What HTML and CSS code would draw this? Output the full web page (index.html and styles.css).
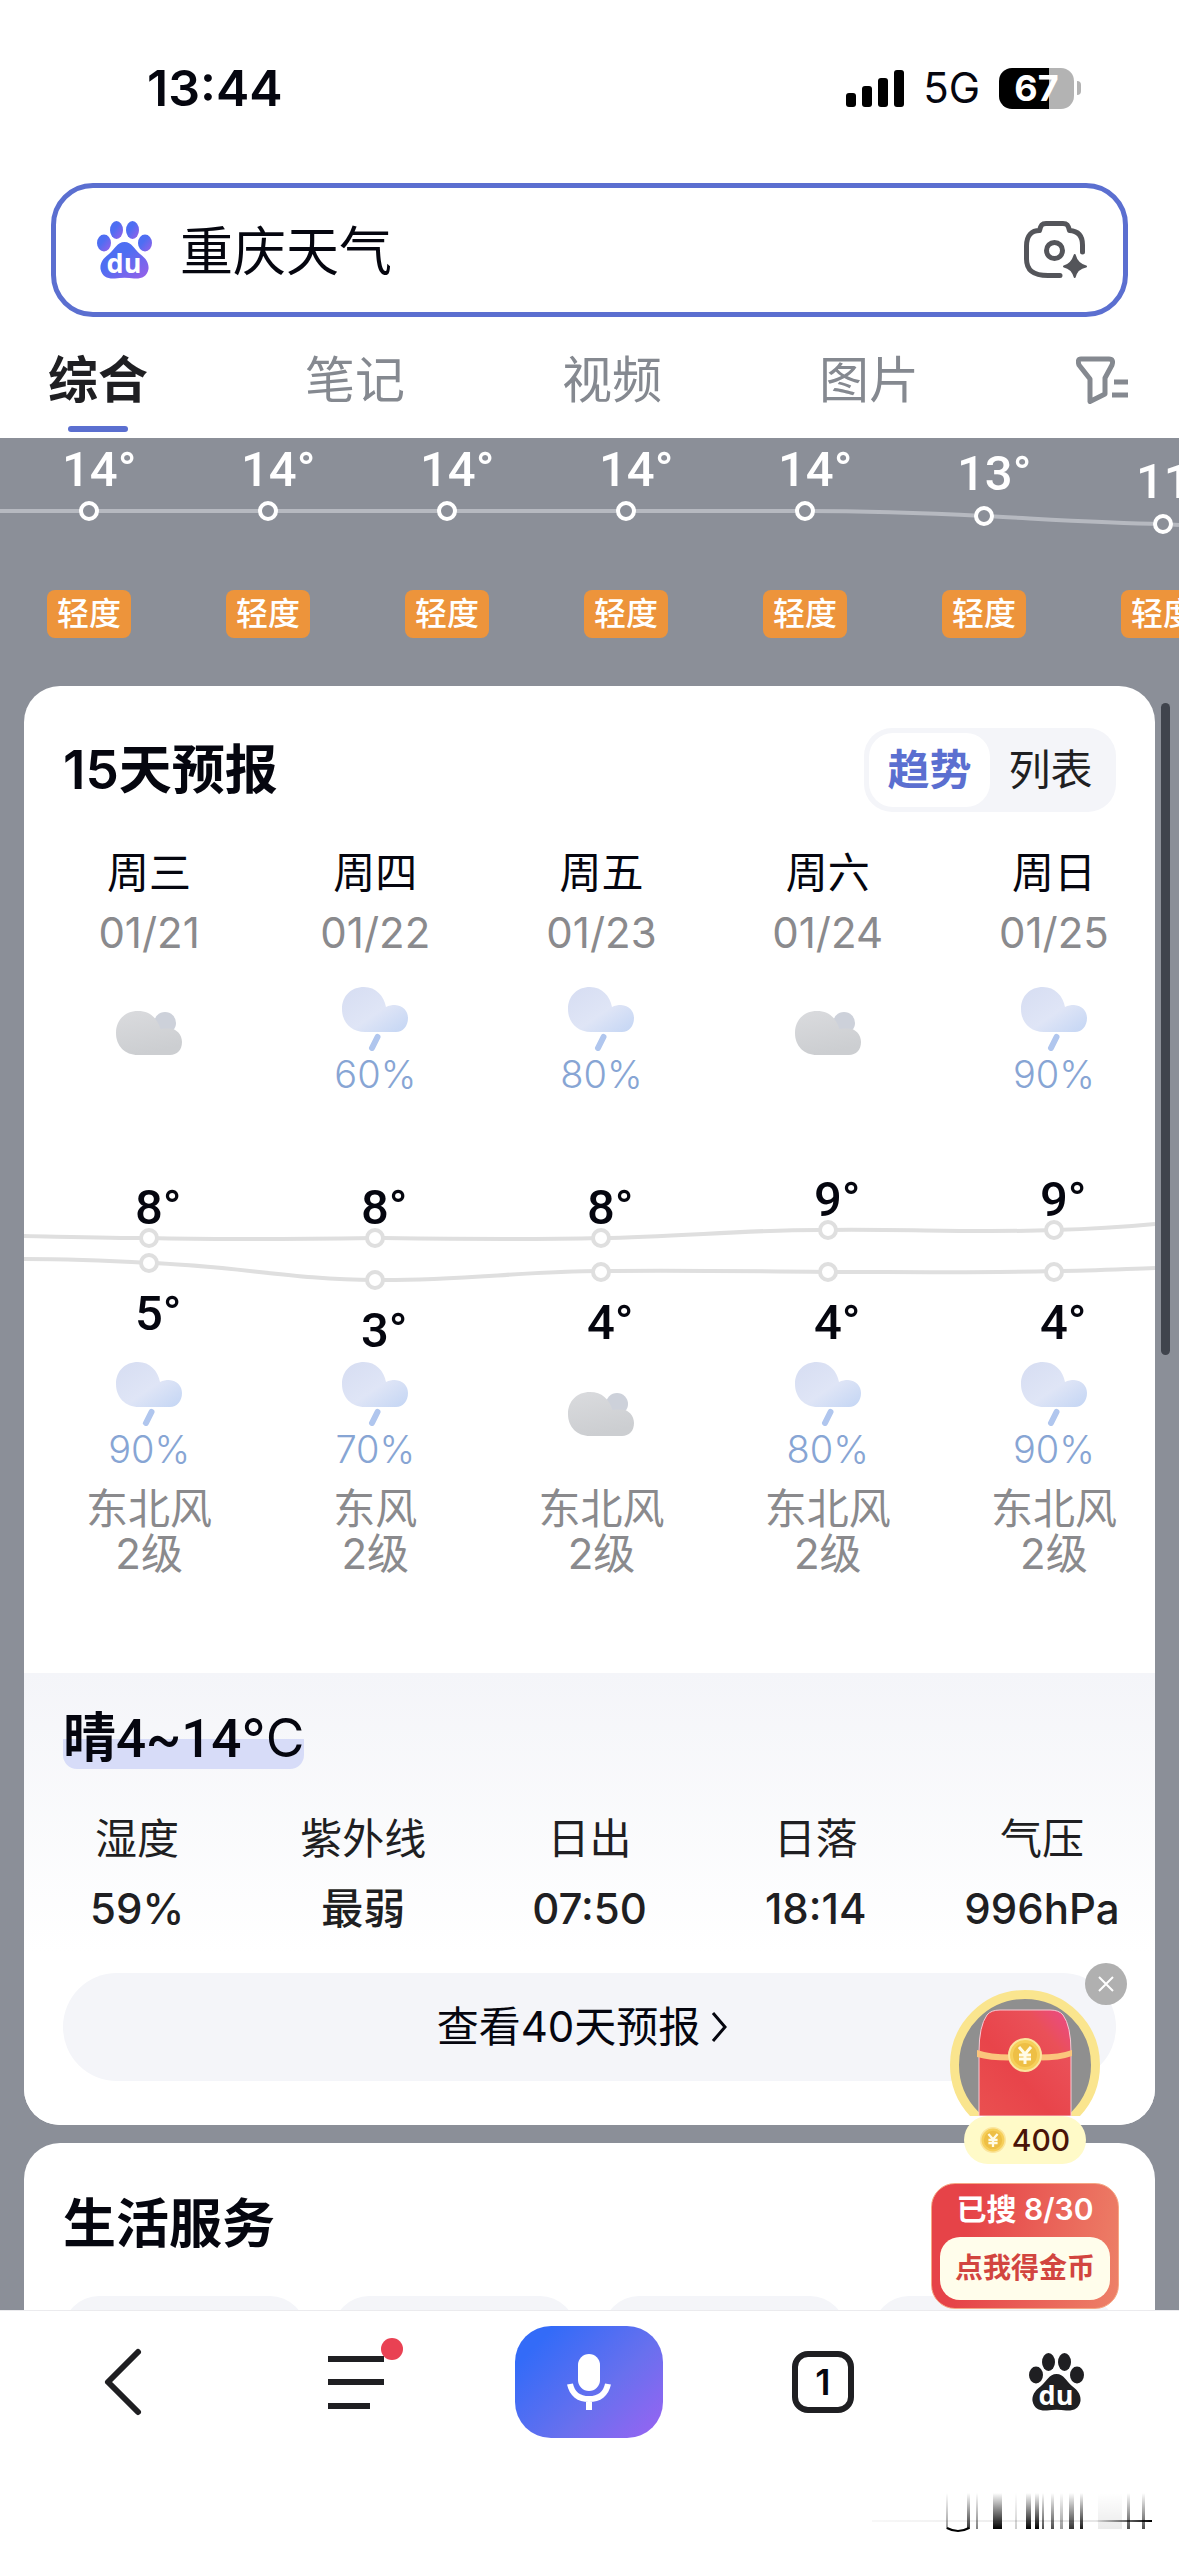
FILE: index.html
```html
<!DOCTYPE html>
<html lang="zh-CN">
<head>
<meta charset="utf-8">
<meta name="viewport" content="width=device-width, initial-scale=1">
<title>重庆天气</title>
<link rel="stylesheet" href="styles.css">
</head>
<body>
<svg class="defs" width="0" height="0" aria-hidden="true">
  <defs>
    <linearGradient id="pawFill" x1="0" y1="0" x2="1" y2="1">
      <stop offset="0.4" stop-color="#4e6ef2"/><stop offset="1" stop-color="#9a5fe8"/>
    </linearGradient>
    <linearGradient id="rainFill" x1="0" y1="0" x2="1" y2="1">
      <stop offset="0" stop-color="#d6ddf2"/><stop offset="0.55" stop-color="#dfe5f6"/><stop offset="1" stop-color="#c3d5f4"/>
    </linearGradient>
    <linearGradient id="cloudFill" x1="0" y1="0" x2="0.3" y2="1">
      <stop offset="0" stop-color="#dadbde"/><stop offset="1" stop-color="#ccced1"/>
    </linearGradient>
    <linearGradient id="envelopeFill" x1="0" y1="1" x2="1" y2="0">
      <stop offset="0" stop-color="#ea5050"/><stop offset="0.4" stop-color="#e8444a"/><stop offset="0.75" stop-color="#ea5058"/><stop offset="1" stop-color="#ea4a8a"/>
    </linearGradient>
    <linearGradient id="streak" x1="0" y1="0" x2="0" y2="1">
      <stop offset="0" stop-color="#000" stop-opacity="0"/><stop offset="1" stop-color="#000"/>
    </linearGradient>
    <linearGradient id="sweep" x1="0" y1="0" x2="1" y2="0">
      <stop offset="0" stop-color="#000" stop-opacity="0.03"/><stop offset="0.8" stop-color="#000" stop-opacity="0.1"/><stop offset="1" stop-color="#000"/>
    </linearGradient>
    <symbol id="rain" viewBox="0 0 66 64">
      <path d="M22 0C34 0 42 9 44 20C47 18.500 50 18 53 18C61 18.500 66 24 66 31C66 39 61 45 54 45H23C9 45 0 35 0 22C0 9 9 0 22 0Z" fill="url(#rainFill)"/>
      <path d="M35.500 50L30 61" stroke="#b0c6ee" stroke-width="6" stroke-linecap="round"/>
    </symbol>
    <symbol id="cloud" viewBox="0 0 66 44">
      <circle cx="49" cy="12" r="11" fill="#cdd1da"/>
      <path d="M22 0C34 0 41 7 44.500 18C47 17 50 17.500 54 17.500C61 18 66 24 66 31C66 39 61 44 54 44H22C9 44 0 35 0 22C0 9 9 0 22 0Z" fill="url(#cloudFill)"/>
    </symbol>
    <symbol id="coin" viewBox="0 0 34 34">
      <circle cx="17" cy="17" r="16" fill="#f6cf5a" stroke="#fbe59c" stroke-width="2"/>
      <circle cx="17" cy="17" r="12" fill="#eebf45"/>
      <path d="M11 9L17 16L23 9M17 16V26M11 17H23M11 21H23" fill="none" stroke="#fffbe6" stroke-width="3"/>
    </symbol>
    <symbol id="paw" viewBox="0 0 55 58">
      <ellipse cx="7" cy="22" rx="7" ry="8.500"/><ellipse cx="19.500" cy="9" rx="6.500" ry="9"/>
      <ellipse cx="35.500" cy="9" rx="6.500" ry="9"/><ellipse cx="48" cy="22" rx="7" ry="8.500"/>
      <path d="M27.500 21C35 21 37 28 43 33C50 38 52 43 51.500 48C50 56 44 58 37 57.500C31 56.500 24 56.500 18 57.500C11 58 5 56 3.500 48C3 43 5 38 12 33C18 28 20 21 27.500 21Z"/>
    </symbol>
  </defs>
</svg>

<header class="top">
  <div class="status">
    <time class="status-time">13:44</time>
    <div class="status-right">
      <svg width="58" height="38" viewBox="0 0 58 38" aria-hidden="true"><rect y="24" width="10" height="14" rx="3"/><rect x="16" y="17" width="10" height="21" rx="3"/><rect x="32" y="9" width="10" height="29" rx="3"/><rect x="48" y="1" width="10" height="37" rx="3"/></svg>
      <span class="network">5G</span>
      <span class="battery"><span class="battery-body">67</span><span class="battery-tip"></span></span>
    </div>
  </div>
  <form class="search">
    <svg class="paw-blue" width="55" height="58" viewBox="0 0 55 58" aria-hidden="true"><use href="#paw"/><text class="paw-text" x="27" y="52">du</text></svg>
    <input class="search-input" type="text" value="重庆天气" aria-label="搜索">
    <button class="icon-button" type="button" aria-label="拍照搜索">
      <svg width="63" height="58" viewBox="0 0 63 58" fill="none" stroke="#54555a" stroke-width="5" stroke-linecap="round" stroke-linejoin="round"><path d="M36 54.500H24C9 54.500 2.500 49 2.500 38V25C2.500 14 8 9.500 15.500 9.500C17 4 18 2.500 22 2.500H39C43 2.500 44 4 45.500 9.500C53 10 58.500 14 58.500 24V31"/><circle cx="30.500" cy="29.500" r="8"/><path d="M50.700 34Q53 43 62 45.500Q53 47 50.700 56Q48 47 40 45.500Q48 43 50.700 34Z" fill="#54555a" stroke-width="2"/></svg>
    </button>
  </form>
  <nav class="tabs">
    <a class="tab tab-active" href="#all">综合</a>
    <a class="tab" href="#notes">笔记</a>
    <a class="tab" href="#video">视频</a>
    <a class="tab" href="#images">图片</a>
    <button class="icon-button" type="button" aria-label="筛选">
      <svg width="52" height="48" viewBox="0 0 52 48" fill="none" stroke="#858990" stroke-width="5" stroke-linejoin="round"><path d="M5 3H33Q38 3 36 9L29 22V38L14 45.500V23L3 9Q1 3 5 3Z"/><path d="M38 26H52M36 39H52"/></svg>
    </button>
  </nav>
</header>

<main class="content">
  <section class="hourly" aria-label="逐小时预报">
    <svg class="chart" viewBox="0 0 1179 130">
      <path d="M0 73H805C865 73 925 75 984 78C1044 81 1104 85 1163 86L1179 87" fill="none" stroke="#b6b9c0" stroke-width="4"/>
      <g class="hour-dots"><circle cx="89" cy="73" r="8"/><circle cx="268" cy="73" r="8"/><circle cx="447" cy="73" r="8"/><circle cx="626" cy="73" r="8"/><circle cx="805" cy="73" r="8"/><circle cx="984" cy="78" r="8"/><circle cx="1163" cy="86" r="8"/></g>
      <g class="hour-temps"><text x="62" y="48">14°</text><text x="241" y="48">14°</text><text x="420" y="48">14°</text><text x="599" y="48">14°</text><text x="778" y="48">14°</text><text x="957" y="52">13°</text><text x="1136" y="60">11°</text></g>
    </svg>
    <ul class="air">
      <li>轻度</li><li>轻度</li><li>轻度</li><li>轻度</li><li>轻度</li><li>轻度</li><li>轻度</li>
    </ul>
  </section>

  <section class="card">
    <div class="card-head">
      <h2 class="card-title">15天预报</h2>
      <div class="toggle">
        <button class="toggle-item toggle-on" type="button">趋势</button>
        <button class="toggle-item" type="button">列表</button>
      </div>
    </div>
    <ul class="days">
      <li><b class="weekday">周三</b><span class="date">01/21</span><div class="sky"><svg class="cloud"><use href="#cloud"/></svg></div></li>
      <li><b class="weekday">周四</b><span class="date">01/22</span><div class="sky"><svg class="rain"><use href="#rain"/></svg><span class="chance">60%</span></div></li>
      <li><b class="weekday">周五</b><span class="date">01/23</span><div class="sky"><svg class="rain"><use href="#rain"/></svg><span class="chance">80%</span></div></li>
      <li><b class="weekday">周六</b><span class="date">01/24</span><div class="sky"><svg class="cloud"><use href="#cloud"/></svg></div></li>
      <li><b class="weekday">周日</b><span class="date">01/25</span><div class="sky"><svg class="rain"><use href="#rain"/></svg><span class="chance">90%</span></div></li>
    </ul>
    <svg class="chart" viewBox="0 0 1131 260">
      <g fill="none" stroke="#dfdfdf" stroke-width="4">
        <path d="M0 141C50 142 85 143 125 143C200 145 276 144 351 143C430 144 500 145 577 143C655 142 730 134 804 135C880 134 960 138 1030 135C1070 134 1100 132 1131 129"/>
        <path d="M0 164C50 164 90 166 125 168C205 170 270 185 351 185C435 186 500 176 577 176C650 175 730 176 804 177C880 177 960 178 1030 176C1070 176 1100 174 1131 173"/>
      </g>
      <g class="day-dots"><circle cx="125" cy="143" r="8"/><circle cx="351" cy="143" r="8"/><circle cx="577" cy="143" r="8"/><circle cx="804" cy="135" r="8"/><circle cx="1030" cy="135" r="8"/><circle cx="125" cy="168" r="8"/><circle cx="351" cy="185" r="8"/><circle cx="577" cy="177" r="8"/><circle cx="804" cy="177" r="8"/><circle cx="1030" cy="177" r="8"/></g>
      <g class="day-temps"><text x="111" y="129">8°</text><text x="337" y="129">8°</text><text x="563" y="129">8°</text><text x="790" y="121">9°</text><text x="1016" y="121">9°</text><text x="111" y="235">5°</text><text x="337" y="252">3°</text><text x="563" y="244">4°</text><text x="790" y="244">4°</text><text x="1016" y="244">4°</text></g>
    </svg>
    <ul class="days nights">
      <li><div class="sky"><svg class="rain"><use href="#rain"/></svg><span class="chance">90%</span></div><span class="wind">东北风<br>2级</span></li>
      <li><div class="sky"><svg class="rain"><use href="#rain"/></svg><span class="chance">70%</span></div><span class="wind">东风<br>2级</span></li>
      <li><div class="sky"><svg class="cloud"><use href="#cloud"/></svg></div><span class="wind">东北风<br>2级</span></li>
      <li><div class="sky"><svg class="rain"><use href="#rain"/></svg><span class="chance">80%</span></div><span class="wind">东北风<br>2级</span></li>
      <li><div class="sky"><svg class="rain"><use href="#rain"/></svg><span class="chance">90%</span></div><span class="wind">东北风<br>2级</span></li>
    </ul>
    <div class="today">
      <h3 class="today-title"><span class="mark">晴<span class="digits">4~14</span><span class="unit">°C</span></span></h3>
      <dl class="stats">
        <div><dt>湿度</dt><dd>59%</dd></div>
        <div><dt>紫外线</dt><dd>最弱</dd></div>
        <div><dt>日出</dt><dd>07:50</dd></div>
        <div><dt>日落</dt><dd>18:14</dd></div>
        <div><dt>气压</dt><dd>996hPa</dd></div>
      </dl>
      <a class="more" href="#forty">查看40天预报<svg width="18" height="36" viewBox="0 0 18 36" fill="none" stroke="#05060f" stroke-width="3"><path d="M3 4L15 18L3 32"/></svg></a>
    </div>
  </section>

  <section class="card services">
    <h2 class="card-title">生活服务</h2>
    <div class="service-grid"><div></div><div></div><div></div><div></div></div>
  </section>
  <div class="scrollbar"></div>
  <aside class="reward">
    <button class="reward-close" type="button" aria-label="关闭"><svg width="18" height="18" viewBox="0 0 18 18" stroke="#fff" stroke-width="2"><path d="M2 2L16 16M16 2L2 16"/></svg></button>
    <div class="packet">
      <svg width="150" height="126" viewBox="0 0 150 126" aria-hidden="true">
        <circle cx="75" cy="75" r="70.500" fill="#8f8f8f" stroke="#fae58e" stroke-width="9"/>
        <path d="M29 126V62Q29 36 37 25Q41 20 50 20H100Q109 20 113 25Q121 36 121 62V126Z" fill="url(#envelopeFill)" stroke="#f9c9d4" stroke-width="1"/>
        <path d="M27 60Q45 66 75 64Q105 66 122 60V66Q105 72 75 70Q45 72 27 67Z" fill="#fbc57c"/>
        <use href="#coin" x="58" y="48" width="34" height="34"/>
      </svg>
      <span class="coins"><svg width="26" height="26" aria-hidden="true"><use href="#coin"/></svg>400</span>
    </div>
    <div class="task">
      <span class="task-count">已搜 8/30</span>
      <button class="task-button" type="button">点我得金币</button>
    </div>
  </aside>
</main>

<footer class="toolbar">
  <nav class="tools">
    <button class="tool" type="button" aria-label="返回"><svg width="38" height="66" viewBox="0 0 38 66" fill="none" stroke="#1f1f22" stroke-width="6" stroke-linecap="round" stroke-linejoin="round"><path d="M34 3L4 33L34 63"/></svg></button>
    <button class="tool" type="button" aria-label="菜单"><svg width="76" height="66" viewBox="0 0 76 66"><path d="M10 10H66M10 33H66M10 57H52" stroke="#1f1f22" stroke-width="6"/><circle cx="74" cy="0" r="11" fill="#e94153"/></svg></button>
    <button class="tool" type="button" aria-label="语音搜索"><span class="mic"><svg width="44" height="56" viewBox="0 0 44 56"><rect x="11" y="0" width="22" height="37" rx="11" fill="#fff"/><path d="M3 30C5 40 12 45 22 45S39 40 41 30M22 45V56" fill="none" stroke="#fff" stroke-width="6"/></svg></span></button>
    <button class="tool" type="button"><span class="pages">1</span></button>
    <button class="tool" type="button" aria-label="首页"><svg class="paw-dark" width="55" height="58" viewBox="0 0 55 58"><use href="#paw"/><text class="paw-text" x="27" y="52">du</text></svg></button>
  </nav>
  <svg class="trace" width="280" height="40" viewBox="0 0 280 40" aria-hidden="true">
    <g fill="url(#streak)">
      <rect x="74" width="2" height="36" opacity="0.400"/><rect x="95" width="3" height="36" opacity="0.800"/><rect x="104" width="2" height="36" opacity="0.500"/><rect x="121" width="9" height="36"/><rect x="143" width="2" height="36" opacity="0.200"/><rect x="154" width="5" height="36"/><rect x="163" width="4" height="36"/><rect x="170" width="2" height="36" opacity="0.700"/><rect x="179" width="3" height="36" opacity="0.700"/><rect x="188" width="3" height="36" opacity="0.400"/><rect x="197" width="5" height="36" opacity="0.800"/><rect x="208" width="3" height="36" opacity="0.900"/><rect x="226" width="24" height="36" opacity="0.080"/><rect x="255" width="3" height="36" opacity="0.700"/><rect x="270" width="3" height="36" opacity="0.700"/>
    </g>
    <rect y="27" width="280" height="2" fill="url(#sweep)"/>
    <path d="M75 35Q86 41 97 35" fill="none" stroke="#000" stroke-width="2"/>
  </svg>
</footer>
</body>
</html>
```
FILE: styles.css
```css
* { box-sizing: border-box; }

body {
  margin: 0;
  height: 100vh;
  display: flex;
  flex-direction: column;
  overflow: hidden;
  background: #fff;
  color: #05060f;
  font-family: Inter, "Noto Sans CJK SC", sans-serif;
  font-size: 42px;
  line-height: 60px;
}

h2, h3, ul, dl, dd { margin: 0; padding: 0; }
ul { list-style: none; }
a { color: inherit; text-decoration: none; }
svg { display: block; flex-shrink: 0; }
button { border: 0; padding: 0; background: none; font: inherit; color: inherit; }
.defs { position: absolute; }
.icon-button { display: flex; }

/* Status bar */
.status {
  display: flex;
  justify-content: space-between;
  align-items: center;
  padding: 58px 98px 65px 147px;
}
.status-time { font-size: 50px; font-weight: 600; }
.status-right { display: flex; align-items: center; gap: 19px; }
.battery { display: flex; align-items: center; gap: 3px; }
.battery-body {
  width: 75px;
  border-radius: 13px;
  background: linear-gradient(90deg, #000 50px, #b3b3b3 50px);
  color: #fff;
  font-size: 36px;
  font-weight: 700;
  line-height: 41px;
  text-align: center;
}
.battery-tip { width: 4px; height: 14px; border-radius: 0 7px 7px 0; background: #b3b3b3; }

/* Search box and result tabs */
.search {
  display: flex;
  align-items: center;
  margin: 0 51px;
  height: 134px;
  padding: 0 36px 0 41px;
  border: 5px solid #5b6fd0;
  border-radius: 42px;
}
.search-input {
  flex: 1;
  min-width: 0;
  margin: 0 28px;
  padding: 4px 0 0;
  border: 0;
  outline: 0;
  background: none;
  color: inherit;
  font: inherit;
  font-size: 53px;
}
.paw-blue { fill: url(#pawFill); }
.paw-dark { fill: #1f1f22; }
.paw-text { fill: #fff; font: 700 27px "Open Sans", sans-serif; text-anchor: middle; }
.tabs {
  display: flex;
  justify-content: space-between;
  align-items: center;
  padding: 33px 51px 0 48px;
}
.tab {
  position: relative;
  padding-bottom: 28px;
  color: #858990;
  font-size: 50px;
}
.tabs .icon-button { padding-bottom: 28px; }
.tab-active { color: #1f1f22; font-weight: 700; }
.tab-active::after {
  content: "";
  position: absolute;
  bottom: 6px;
  left: 50%;
  width: 60px;
  margin-left: -30px;
  height: 6px;
  border-radius: 3px;
  background: #5b6fd0;
}

/* Scrolling content */
.content {
  position: relative;
  flex: 1;
  min-height: 0;
  overflow: hidden;
  background: #8b8f98;
}
.chart { width: 100%; height: auto; }
.hour-dots { fill: #8b8f98; stroke: #fff; stroke-width: 4px; }
.hour-temps { fill: #fff; font: 500 49px Roboto, sans-serif; }
.air { display: flex; padding: 22px 0 48px; }
.air li {
  flex: 0 0 84px;
  margin: 0 48px 0 47px;
  border-radius: 8px;
  background: #ed943b;
  color: #fff;
  font-size: 32px;
  font-weight: 500;
  line-height: 48px;
  text-align: center;
}

.card {
  margin: 0 24px 18px;
  overflow: hidden;
  border-radius: 36px;
  background: #fff;
}
.card-head {
  display: flex;
  justify-content: space-between;
  align-items: center;
  padding: 42px 39px 31px;
}
.card-title { font-size: 53px; font-weight: 600; }
.toggle {
  display: flex;
  padding: 5px;
  border-radius: 28px;
  background: #f4f5f9;
}
.toggle-item { width: 121px; line-height: 74px; color: #1f1f22; }
.toggle-on { border-radius: 24px; background: #fff; color: #5b6fd0; font-weight: 600; }

.days {
  display: grid;
  grid-template-columns: repeat(5, 1fr);
  margin: 0 -12px 0 12px;
  text-align: center;
}
.days li { display: flex; flex-direction: column; }
.weekday { font-weight: 400; }
.date { color: #8a8a8d; }
.sky {
  display: flex;
  flex-direction: column;
  align-items: center;
  height: 108px;
}
.days .date + .sky { margin-top: 24px; }
.rain { width: 66px; height: 64px; }
.cloud { width: 66px; height: 44px; margin-top: 24px; }
.nights .cloud { margin-top: 30px; }
.chance { color: #87a5d4; font-size: 38px; font-weight: 350; line-height: 46px; }
.day-dots { fill: #fff; stroke: #dfdfdf; stroke-width: 4px; }
.day-temps { fill: #05060f; font: 500 49px Roboto, sans-serif; }
.nights { padding: 7px 0 97px; }
.wind { padding-top: 16px; color: #8a8a8d; line-height: 45px; }

/* Today's summary */
.today {
  padding: 35px 0 44px;
  background: linear-gradient(#f4f5f9, #fff 280px);
}
.today-title { display: flex; padding: 0 39px; font-size: 53px; font-weight: 600; }
.mark {
  border-radius: 14px;
  background: linear-gradient(transparent 31px, #d7dcf8 31px);
}
.digits { font-family: Roboto, sans-serif; font-weight: 500; }
.unit { font-weight: 400; }
.stats {
  display: grid;
  grid-template-columns: repeat(5, 1fr);
  padding: 40px 0 34px;
  color: #1f1f22;
  text-align: center;
}
.stats dd { padding-top: 10px; font-weight: 500; }
.more {
  display: flex;
  justify-content: center;
  align-items: center;
  gap: 10px;
  height: 108px;
  margin: 0 39px;
  padding-right: 14px;
  border-radius: 54px;
  background: #f4f5f9;
}

.services { padding: 51px 39px; }
.services .card-title { font-weight: 700; }
.service-grid {
  display: grid;
  grid-template-columns: repeat(4, 1fr);
  gap: 27px;
  padding-top: 42px;
}
.service-grid div { height: 120px; border-radius: 36px; background: #f4f5f9; }

/* Overlays */
.scrollbar {
  position: absolute;
  top: 265px;
  right: 9px;
  width: 9px;
  height: 652px;
  border-radius: 5px;
  background: #40444d;
}
.reward {
  position: absolute;
  right: 60px;
  bottom: 1px;
  display: flex;
  flex-direction: column;
  align-items: center;
  width: 188px;
}
.reward-close {
  position: absolute;
  top: -27px;
  right: -8px;
  display: grid;
  place-items: center;
  width: 42px;
  height: 42px;
  border-radius: 50%;
  background: #b0b0b0;
}
.packet { display: flex; flex-direction: column; align-items: center; }
.coins {
  display: flex;
  justify-content: center;
  align-items: center;
  gap: 6px;
  width: 122px;
  height: 48px;
  border-radius: 24px;
  background: #fffac8;
  color: #4a1408;
  font-size: 30px;
  font-weight: 500;
}
.task {
  display: flex;
  flex-direction: column;
  width: 100%;
  margin-top: 19px;
  padding: 8px;
  border: 1px solid #f6a784;
  border-radius: 24px;
  background: linear-gradient(100deg, #e64348 20%, #ed8168);
  text-align: center;
}
.task-count { color: #fff; font-size: 30px; font-weight: 600; line-height: 34px; padding-bottom: 11px; }
.task-button {
  border-radius: 20px;
  background: #fffdeb;
  color: #d2453f;
  font-size: 28px;
  font-weight: 600;
  line-height: 63px;
}

/* Bottom toolbar */
.toolbar {
  padding: 15px 6px 23px;
  border-top: 1px solid #ebebee;
}
.tools { display: grid; grid-template-columns: repeat(5, 1fr); height: 112px; }
.tool { display: grid; place-items: center; }
.tool svg { overflow: visible; }
.mic {
  display: grid;
  place-items: center;
  width: 148px;
  height: 112px;
  border-radius: 36px;
  background: linear-gradient(135deg, #336bf8 15%, #6870ee 60%, #9a63f2);
}
.pages {
  width: 62px;
  height: 62px;
  border: 6px solid #1f1f22;
  border-radius: 16px;
  font-size: 36px;
  font-weight: 600;
  line-height: 50px;
}
.trace { margin: 55px 21px 0 auto; }
```
